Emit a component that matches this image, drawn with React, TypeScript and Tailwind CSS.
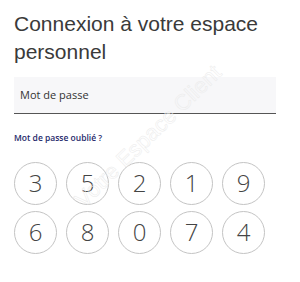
import React from 'react';

const DIGITS = [
  ['3', '5', '2', '1', '9'],
  ['6', '8', '0', '7', '4'],
];

const App: React.FC = () => {
  return (
    <div className="relative w-[300px] h-[282px] overflow-hidden bg-white">
      <div className="px-[14px] pt-[10px]">
        {/* Title */}
        <h1 className="font-['Liberation_Sans',Arial,sans-serif] text-[21px] leading-[28px] text-[#3a3a3a]">
          Connexion à votre espace
          <br />
          personnel
        </h1>

        {/* Password field */}
        <div className="mt-[11px] w-[262px] h-[37px] bg-[#f7f7f9] border-b border-[#555] flex items-center px-[6px]">
          <span className="font-['Open_Sans',sans-serif] text-[11px] text-[#333]">Mot de passe</span>
        </div>

        {/* Forgot link */}
        <div className="mt-[18px] font-['Open_Sans',sans-serif] text-[8.5px] font-semibold text-[#1f2a6b]">
          Mot de passe oublié ?
        </div>

        {/* Keypad */}
        <div className="mt-[17px] flex flex-col gap-[6px]">
          {DIGITS.map((row, i) => (
            <div key={i} className="flex gap-[9px]">
              {row.map((d) => (
                <div
                  key={d}
                  className="w-[43px] h-[43px] rounded-full border border-[#c4c4c4] flex items-center justify-center font-['Open_Sans',sans-serif] font-light text-[24px] text-[#444]"
                >
                  {d}
                </div>
              ))}
            </div>
          ))}
        </div>
      </div>

      {/* Watermark */}
      <div className="pointer-events-none absolute left-[148px] top-[136px] -translate-x-1/2 -translate-y-1/2 -rotate-[44deg] whitespace-nowrap font-['Liberation_Sans',Arial,sans-serif] text-[22px] text-transparent [-webkit-text-stroke:0.5px_#ebebeb]">
        Votre Espace Client
      </div>
    </div>
  );
};

export default App;
